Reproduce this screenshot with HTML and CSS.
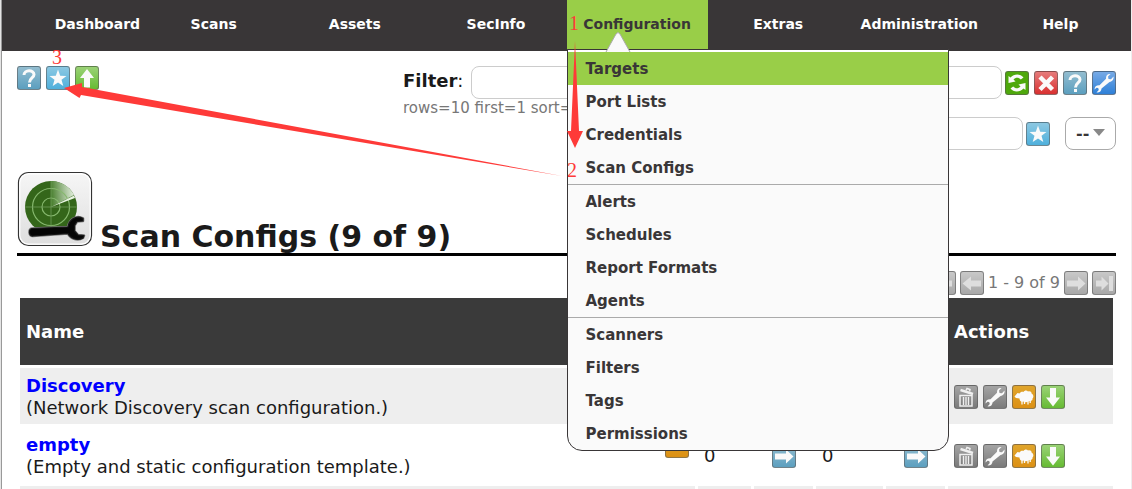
FILE: index.html
```
<!DOCTYPE html>
<html lang="en">
<head>
  <meta charset="UTF-8">
  <title>Scan Configs</title>
  <link rel="stylesheet" href="styles.css">
</head>
<body>
  <!-- Icon shapes, 24x24 -->
  <svg class="sprite" aria-hidden="true">
    <symbol id="i-help" viewBox="0 0 24 24"><path d="M7 9C7 3.500 17 3.500 17 8.500C17 12 12.500 12 12.500 16.500" fill="none" stroke="#fafafa" stroke-width="3"/><rect x="11" y="18" width="3" height="3" fill="#fafafa"/></symbol>
    <symbol id="i-star" viewBox="0 0 24 24"><path d="M12 3.500L14.200 9.700L20.500 9.900L15.500 13.800L17.300 20L12 16.400L6.700 20L8.500 13.800L3.500 9.900L9.800 9.700Z" fill="#fafafa"/></symbol>
    <symbol id="i-up" viewBox="0 0 24 24"><path d="M12 3L19 12H15V21.500H9V12H5Z" fill="#fafafa"/></symbol>
    <symbol id="i-down" viewBox="0 0 24 24"><path d="M12 21.500L19 12.500H15V3H9V12.500H5Z" fill="#fafafa"/></symbol>
    <symbol id="i-right" viewBox="0 0 24 24"><path d="M21.500 12.500L14 5.500V9.500H3V15.500H14V19.500Z" fill="currentColor"/></symbol>
    <symbol id="i-left" viewBox="0 0 24 24"><path d="M2.500 12.500L11 5.500V9.500H21V15.500H11V19.500Z" fill="currentColor"/></symbol>
    <symbol id="i-last" viewBox="0 0 24 24"><path d="M16.500 12.500L9.500 5.500V9.500H4V15.500H9.500V19.500ZM17 5H21V20H17Z" fill="currentColor"/></symbol>
    <symbol id="i-first" viewBox="0 0 24 24"><path d="M7.500 12.500L14.500 5.500V9.500H20V15.500H14.500V19.500ZM3 5H7V20H3Z" fill="currentColor"/></symbol>
    <symbol id="i-refresh" viewBox="0 0 24 24"><path d="M3.500 5L5.500 6.500C9 2.500 15.500 2.500 18.500 6.500L15.800 8.500C13.500 6 10.500 6.300 8.500 8.500L10.500 10.500L3.500 12Z" fill="#fafafa"/><path d="M20.500 19L18.500 17.500C15 21.500 8.500 21.500 5.500 17.500L8.200 15.500C10.500 18 13.500 17.700 15.500 15.500L13.500 13.500L20.500 12Z" fill="#fafafa"/></symbol>
    <symbol id="i-delete" viewBox="0 0 24 24"><path d="M6 6L18.500 18.500M18.500 6L6 18.500" stroke="#fafafa" stroke-width="4.500"/></symbol>
    <symbol id="i-wrench" viewBox="0 0 24 24"><path d="M18.500 3L16 5.500L16.500 8L19 8.300L21.500 5.500C22 8 20.500 10.500 17.500 11L9.500 17.500C9.500 20 7.500 21.800 4.500 21.500L6.800 19L6.200 17L4.500 16.800L2.500 18.500C2.500 15.500 4.500 14 7.500 14.200L14 7.800C13.800 4.500 15.500 2.500 18.500 3Z" fill="#fafafa"/></symbol>
    <symbol id="i-trash" viewBox="0 0 24 24"><path d="M6 10.500H18V21H6Z" fill="none" stroke="#f0f0f0" stroke-width="1.500"/><path d="M9.500 12V20M12 12V20M14.500 12V20" stroke="#f0f0f0" stroke-width="1.400"/><path d="M6.500 5L19 9" stroke="#f0f0f0" stroke-width="2.400"/><path d="M12 5.500L13 3.500L16 4.500L15.500 6.500" fill="none" stroke="#f0f0f0" stroke-width="1.500"/></symbol>
    <symbol id="i-sheep" viewBox="0 0 24 24"><path d="M2.500 11.500L5.500 8L7.500 8.500C8.500 6.500 10.500 6.500 11.500 7C12.500 5 15 5 16 6.500C18 5.500 20 7 19.500 8.500C21.500 9.500 22 12 20.500 13.500C21 15.500 18.500 16.500 17 16C15 17.500 12.500 17.500 11.500 16.500C9.500 17.500 7.500 16 7.500 13.500L4 13Z" fill="#fafafa"/><path d="M10 16V19.500M12.500 16V19M16 16V19.500M18.200 15V18" stroke="#fafafa" stroke-width="1.300"/></symbol>
  </svg>

  <div class="page">
    <nav class="nav">
      <a class="nav-item first" href="#">Dashboard</a>
      <a class="nav-item" href="#">Scans</a>
      <a class="nav-item" href="#">Assets</a>
      <a class="nav-item" href="#">SecInfo</a>
      <div class="nav-open">
        <a class="nav-item active" href="#">Configuration</a>
        <svg class="pointer" width="26" height="20" viewBox="0 0 26 20"><path d="M1 20L11 2Q13 -1 15 2L25 20" fill="#fafafa" stroke="#aaa" stroke-width="1"/></svg>
        <ul class="menu">
          <li><a class="selected" href="#">Targets</a></li>
          <li><a href="#">Port Lists</a></li>
          <li><a href="#">Credentials</a></li>
          <li><a href="#">Scan Configs</a></li>
          <li class="section"><a href="#">Alerts</a></li>
          <li><a href="#">Schedules</a></li>
          <li><a href="#">Report Formats</a></li>
          <li><a href="#">Agents</a></li>
          <li class="section"><a href="#">Scanners</a></li>
          <li><a href="#">Filters</a></li>
          <li><a href="#">Tags</a></li>
          <li><a href="#">Permissions</a></li>
        </ul>
      </div>
      <a class="nav-item" href="#">Extras</a>
      <a class="nav-item" href="#">Administration</a>
      <a class="nav-item" href="#">Help</a>
    </nav>

    <main class="content">
      <div class="toolbar">
        <div class="icons">
          <a class="icon teal" href="#" aria-label="Help"><svg><use href="#i-help"/></svg></a>
          <a class="icon sky" href="#" aria-label="New Scan Config"><svg><use href="#i-star"/></svg></a>
          <a class="icon green" href="#" aria-label="Import Scan Config"><svg><use href="#i-up"/></svg></a>
        </div>
        <form class="filter">
          <div class="filter-row">
            <label for="filter"><b>Filter</b>:</label>
            <input class="filter-text" type="text" id="filter">
            <div class="icons">
              <button class="icon leaf" type="submit" aria-label="Update Filter"><svg><use href="#i-refresh"/></svg></button>
              <button class="icon red" type="reset" aria-label="Reset Filter"><svg><use href="#i-delete"/></svg></button>
              <a class="icon teal" href="#" aria-label="Filter Help"><svg><use href="#i-help"/></svg></a>
              <a class="icon blue" href="#" aria-label="Edit Filter"><svg><use href="#i-wrench"/></svg></a>
            </div>
          </div>
          <div class="filter-terms">rows=10 first=1 sort=</div>
          <div class="filter-row save-row">
            <input class="filter-name" type="text" aria-label="Filter name">
            <button class="icon sky" type="button" aria-label="Save Filter"><svg><use href="#i-star"/></svg></button>
            <div class="select">
              <select aria-label="Saved filters"><option>--</option></select>
            </div>
          </div>
        </form>
      </div>

      <header class="heading">
        <svg class="logo" width="76" height="76" viewBox="0 0 76 76" aria-hidden="true">
          <defs>
            <linearGradient id="tile" x1="0" y1="0" x2="0" y2="1"><stop offset="0" stop-color="#f6f6f6"/><stop offset="1" stop-color="#dedede"/></linearGradient>
            <linearGradient id="sweep" x1="0" y1="0.500" x2="1" y2="0.400"><stop offset="0" stop-color="#4a8030"/><stop offset="1" stop-color="#e4efdf"/></linearGradient>
          </defs>
          <rect x="1.500" y="1.500" width="73" height="73" rx="10" fill="url(#tile)" stroke="#333" stroke-width="1.200"/>
          <rect x="2.800" y="2.800" width="70.400" height="70.400" rx="9" fill="none" stroke="#fff" stroke-width="1.200"/>
          <circle cx="34" cy="36" r="26" fill="#34661a"/>
          <path d="M34 36V10A26 26 0 0 1 57 24Z" fill="url(#sweep)"/>
          <g fill="none" stroke="#86b86e" stroke-width="1.200"><circle cx="34" cy="36" r="18.500"/><circle cx="34" cy="36" r="9"/></g>
          <path d="M8 36H60M34 10V62" stroke="#6f9d5b" stroke-width="0.800"/>
          <path d="M34 36L57 24.500L58 27Z" fill="#e8f4e2"/>
          <path d="M15 57.500L51 56C52 49 59 43.500 66 47.500L66 50L60 50.500L57.500 54.500V60L61 64L67 64.500L66 67C60 70.500 53 67 51 62.500L16 65C11.500 65.500 11.500 58 15 57.500Z" fill="#000" stroke="#777" stroke-width="2.600" stroke-linejoin="round"/>
          <path d="M15 57.500L51 56C52 49 59 43.500 66 47.500L66 50L60 50.500L57.500 54.500V60L61 64L67 64.500L66 67C60 70.500 53 67 51 62.500L16 65C11.500 65.500 11.500 58 15 57.500Z" fill="#050505" stroke="#151515" stroke-width="1.200" stroke-linejoin="round"/>
        </svg>
        <h1>Scan Configs (9 of 9)</h1>
      </header>

      <div class="pager">
        <span class="icon off"><svg><use href="#i-first"/></svg></span>
        <span class="icon off"><svg><use href="#i-left"/></svg></span>
        <span>1 - 9 of 9</span>
        <span class="icon off"><svg><use href="#i-right"/></svg></span>
        <span class="icon off"><svg><use href="#i-last"/></svg></span>
      </div>

      <table class="configs">
        <colgroup>
          <col><col class="c-total"><col class="c-trend"><col class="c-nvts"><col class="c-trend"><col class="c-actions">
        </colgroup>
        <thead>
          <tr><th>Name</th><th colspan="2"></th><th colspan="2"></th><th>Actions</th></tr>
        </thead>
        <tbody>
          <tr>
            <td><a class="name" href="#">Discovery</a><br>(Network Discovery scan configuration.)</td>
            <td></td><td></td><td></td><td></td>
            <td>
              <div class="icons">
                <span class="icon gray"><svg><use href="#i-trash"/></svg></span>
                <span class="icon gray"><svg><use href="#i-wrench"/></svg></span>
                <a class="icon orange" href="#" aria-label="Clone"><svg><use href="#i-sheep"/></svg></a>
                <a class="icon green" href="#" aria-label="Export"><svg><use href="#i-down"/></svg></a>
              </div>
            </td>
          </tr>
          <tr>
            <td><span class="icon orange owner"></span><a class="name" href="#">empty</a><br>(Empty and static configuration template.)</td>
            <td>0</td>
            <td><span class="icon teal trend"><svg><use href="#i-right"/></svg></span></td>
            <td>0</td>
            <td><span class="icon teal trend"><svg><use href="#i-right"/></svg></span></td>
            <td>
              <div class="icons">
                <span class="icon gray"><svg><use href="#i-trash"/></svg></span>
                <span class="icon gray"><svg><use href="#i-wrench"/></svg></span>
                <a class="icon orange" href="#" aria-label="Clone"><svg><use href="#i-sheep"/></svg></a>
                <a class="icon green" href="#" aria-label="Export"><svg><use href="#i-down"/></svg></a>
              </div>
            </td>
          </tr>
          <tr><td></td><td></td><td></td><td></td><td></td><td></td></tr>
        </tbody>
      </table>
    </main>
  </div>

  <!-- Step markers and arrows drawn over the page -->
  <svg class="steps" width="600" height="200" viewBox="0 0 600 200">
    <path d="M575 41L579 131H583L575 148L567 131H571Z"/>
    <path d="M562 176L81 95L79.500 98L64 88L82 83V87Z"/>
    <text x="569" y="30">1</text>
    <text x="567" y="177">2</text>
    <text x="52" y="64">3</text>
  </svg>
</body>
</html>
```
FILE: styles.css
```
* {
  box-sizing: border-box;
}
body {
  margin: 0;
  height: 100vh;
  overflow: hidden;
  border-left: 1px solid #e4e4e4;
  font-family: Verdana, "DejaVu Sans", sans-serif;
  font-size: 18px;
  line-height: 22px;
  color: #1a1a1a;
  background: #fff;
}
.sprite {
  display: none;
}
.page {
  height: 100vh;
  overflow: hidden;
  border-left: 1px solid #999;
  border-right: 1px solid #eee;
}

/* Navigation */
.nav {
  display: grid;
  grid-template-columns: repeat(8, 1fr);
  height: 51px;
  background: #393637;
  font-size: 14px;
  font-weight: bold;
}
.nav-item {
  display: block;
  height: 49px;
  line-height: 49px;
  text-align: center;
  color: #fff;
  text-decoration: none;
}
.nav-item.first {
  padding-right: 3px;
  text-align: right;
}
.nav-item.active {
  background: #99ce48;
  color: #393637;
}
.nav-open {
  position: relative;
}
.pointer {
  position: absolute;
  left: 38px;
  top: 32px;
  z-index: 3;
}
.menu {
  position: absolute;
  top: 49px;
  left: 0;
  z-index: 2;
  width: 382px;
  margin: 0;
  padding: 0;
  list-style: none;
  background: #fafafa;
  border: 1px solid #393637;
  border-radius: 0 0 15px 15px;
  overflow: hidden;
}
.menu::before {
  content: "";
  display: block;
  height: 2px;
  background: #fff;
}
.menu a {
  display: block;
  padding: 2px 0 0 18px;
  font-size: 15px;
  line-height: 31px;
  color: #393637;
  text-decoration: none;
}
.menu .selected {
  background: #99ce48;
}
.menu .section {
  border-top: 1px solid #aaa;
}

/* Icons */
.icons {
  display: flex;
  gap: 5px;
}
.icon {
  display: block;
  flex: none;
  width: 24px;
  height: 24px;
  padding: 0;
  border: 1px solid rgba(90, 90, 90, 0.6);
  border-radius: 3px;
  color: #fafafa;
}
.icon svg {
  display: block;
  width: 24px;
  height: 24px;
  margin: -1px;
}
.teal {
  background: linear-gradient(#93bdd0, #5c9fbf);
}
.sky {
  background: linear-gradient(#8cc8e2, #4fb0dc);
}
.green {
  background: linear-gradient(#9ad276, #66bb33);
}
.leaf {
  background: #4ea80c;
}
.red {
  background: linear-gradient(#e67b7b, #d93030);
}
.blue {
  background: linear-gradient(#77aae6, #2e80d8);
}
.orange {
  background: linear-gradient(#e0a52c, #dc9013);
}
.gray {
  background: linear-gradient(#a4a4a4, #7a7a7a);
}
.off {
  background: linear-gradient(#c8c8c8, #a8a8a8);
  color: #dedede;
}

/* Filter */
.content {
  padding: 15px 15px 0;
}
.toolbar {
  display: flex;
  justify-content: space-between;
  gap: 304px;
}
.filter {
  flex: 1;
}
.filter-row {
  display: flex;
  align-items: center;
  gap: 3px;
}
.filter label {
  width: 65px;
  padding-bottom: 3px;
}
.filter input,
.select select {
  height: 33px;
  border: 1px solid #ccc;
  border-radius: 8px;
  background: #fff;
}
.filter-text {
  flex: 1;
  min-width: 0;
}
.filter-terms {
  font-size: 15px;
  line-height: 18px;
  color: #777;
}
.save-row {
  justify-content: flex-end;
}
.filter-name {
  width: 450px;
}
.select {
  position: relative;
  margin-left: 12px;
}
.select select {
  appearance: none;
  width: 51px;
  padding: 0 10px;
  border-color: #aaa;
  font: bold 16px Verdana, "DejaVu Sans", sans-serif;
  color: #393637;
}
.select::after {
  content: "";
  position: absolute;
  right: 11px;
  top: 12px;
  border: 6px solid transparent;
  border-top: 7px solid #888;
  border-bottom: 0;
  pointer-events: none;
}

/* Heading */
.heading {
  display: flex;
  align-items: flex-end;
  gap: 7px;
  margin-top: 21px;
  border-bottom: 3px solid #000;
}
.logo {
  display: block;
  margin-bottom: 6px;
}
h1 {
  margin: 0;
  font-size: 30px;
  line-height: 32px;
}
.pager {
  display: flex;
  justify-content: flex-end;
  gap: 4px;
  margin-top: 15px;
  font-size: 16px;
  line-height: 24px;
  color: #777;
}

/* Table */
.configs {
  width: 100%;
  table-layout: fixed;
  border-spacing: 3px;
}
.c-total {
  width: 53px;
}
.c-trend {
  width: 59px;
}
.c-nvts {
  width: 67px;
}
.c-actions {
  width: 165px;
}
.configs th {
  height: 67px;
  padding: 6px;
  background: #3a3a3a;
  color: #fff;
  text-align: left;
}
.configs td {
  height: 56px;
  padding: 7px 6px 5px;
}
.configs tbody tr:nth-child(odd) td {
  background: #eee;
}
.name {
  font-weight: bold;
  color: #00f;
  text-decoration: none;
}
.owner {
  float: right;
}
.trend {
  margin: 0 auto;
}

/* Step markers */
.steps {
  position: absolute;
  left: 0;
  top: 0;
  z-index: 4;
  fill: #fe3a38;
  font-family: "Liberation Serif", serif;
  font-size: 20px;
  pointer-events: none;
}
```
